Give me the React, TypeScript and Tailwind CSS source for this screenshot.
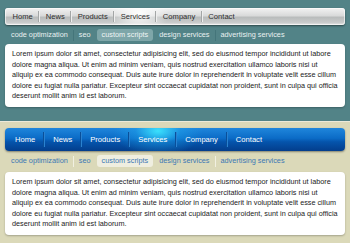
import React from "react";

const menu = ["Home", "News", "Products", "Services", "Company", "Contact"];
const subs = ["code optimization", "seo", "custom scripts", "design services", "advertising services"];
const lorem =
  "Lorem ipsum dolor sit amet, consectetur adipisicing elit, sed do eiusmod tempor incididunt ut labore dolore magna aliqua. Ut enim ad minim veniam, quis nostrud exercitation ullamco laboris nisi ut aliquip ex ea commodo consequat. Duis aute irure dolor in reprehenderit in voluptate velit esse cillum dolore eu fugiat nulla pariatur. Excepteur sint occaecat cupidatat non proident, sunt in culpa qui officia deserunt mollit anim id est laborum.";

const font = { fontFamily: '"Liberation Sans", Arial, sans-serif' };

function SubNav({ dark }: { dark: boolean }) {
  return (
    <div className="flex items-center pl-[1px] h-[12px]">
      {subs.map((s, i) => {
        const active = s === "custom scripts";
        const nextActive = subs[i + 1] === "custom scripts";
        return (
          <React.Fragment key={s}>
            <span
              className={
                "px-[5px] leading-[12px] text-[7.3px] rounded-[3px] " +
                (active
                  ? dark
                    ? "bg-[#7ea6a9] text-[#eef5f5]"
                    : "bg-[#efeee0] text-[#3b78b4]"
                  : dark
                  ? "text-[#e9f1f1]"
                  : "text-[#3b78b4]")
              }
            >
              {s}
            </span>
            {i < subs.length - 1 && (
              <span
                className={
                  "w-[1px] h-[11px] " +
                  (active || nextActive ? "bg-transparent" : dark ? "bg-[#44757a]" : "bg-[#f1f0e1]")
                }
              />
            )}
          </React.Fragment>
        );
      })}
    </div>
  );
}

function Content() {
  return (
    <div className="bg-white rounded-[4px] pl-[7px] pr-[6px] pt-[5px] pb-[5px] text-[7.25px] leading-[10.5px] text-[#222] shadow-[0_1px_2px_rgba(0,0,0,0.25)]">
      {lorem}
    </div>
  );
}

export default function App() {
  return (
    <div className="w-[350px] h-[243px] overflow-hidden" style={font}>
      {/* grey / teal variant */}
      <div className="bg-[#528387] h-[121px] px-[5px] pt-[8px]">
        <div className="relative h-[17px] rounded-[3px] flex items-center pl-[2px] overflow-hidden bg-[linear-gradient(#f2f2f2,#d9dada_45%,#b9bcbc_55%,#c9cbcb_85%,#e6e6e6)] shadow-[0_1px_2px_rgba(0,0,0,0.45),inset_0_0_0_1px_rgba(255,255,255,0.6)]">
          <div className="absolute left-[104px] top-[-14px] w-[60px] h-[40px] rounded-full bg-[radial-gradient(closest-side,rgba(255,255,255,0.95),rgba(255,255,255,0))]" />
          {menu.map((m, i) => (
            <React.Fragment key={m}>
              <span className="relative px-[5.5px] text-[7.6px] text-[#2e2e2e] leading-[17px]">{m}</span>
              {i < menu.length - 1 && (
                <span className="relative w-[2px] h-[11px] border-l border-[#a3a6a6] border-r border-r-[#eeeeee]" />
              )}
            </React.Fragment>
          ))}
        </div>
        <div className="mt-[4px]">
          <SubNav dark />
        </div>
        <div className="mt-[3px]">
          <Content />
        </div>
      </div>

      {/* blue / beige variant */}
      <div className="bg-[#dbd9b9] border-t border-[#eceada] h-[122px] px-[5px] pt-[6px]">
        <div className="relative h-[23px] rounded-[4px] flex items-center pl-[2px] overflow-hidden bg-[linear-gradient(#1f86dc,#0b6bc6_45%,#0554ac_60%,#033d8c)] shadow-[0_1px_2px_rgba(0,0,0,0.4)]">
          <div className="absolute left-[108px] top-[-22px] w-[90px] h-[50px] rounded-full bg-[radial-gradient(closest-side,rgba(60,230,255,0.95),rgba(30,170,240,0.4)_50%,rgba(20,120,220,0))]" />
          {menu.map((m, i) => (
            <React.Fragment key={m}>
              <span className="relative px-[8px] text-[7.6px] text-white leading-[23px]">{m}</span>
              {i < menu.length - 1 && (
                <span className="relative w-[2px] h-[15px] border-l border-[#0a4f99] border-r border-r-[#2a82d0]" />
              )}
            </React.Fragment>
          ))}
        </div>
        <div className="mt-[4px]">
          <SubNav dark={false} />
        </div>
        <div className="mt-[5px]">
          <Content />
        </div>
      </div>
    </div>
  );
}
